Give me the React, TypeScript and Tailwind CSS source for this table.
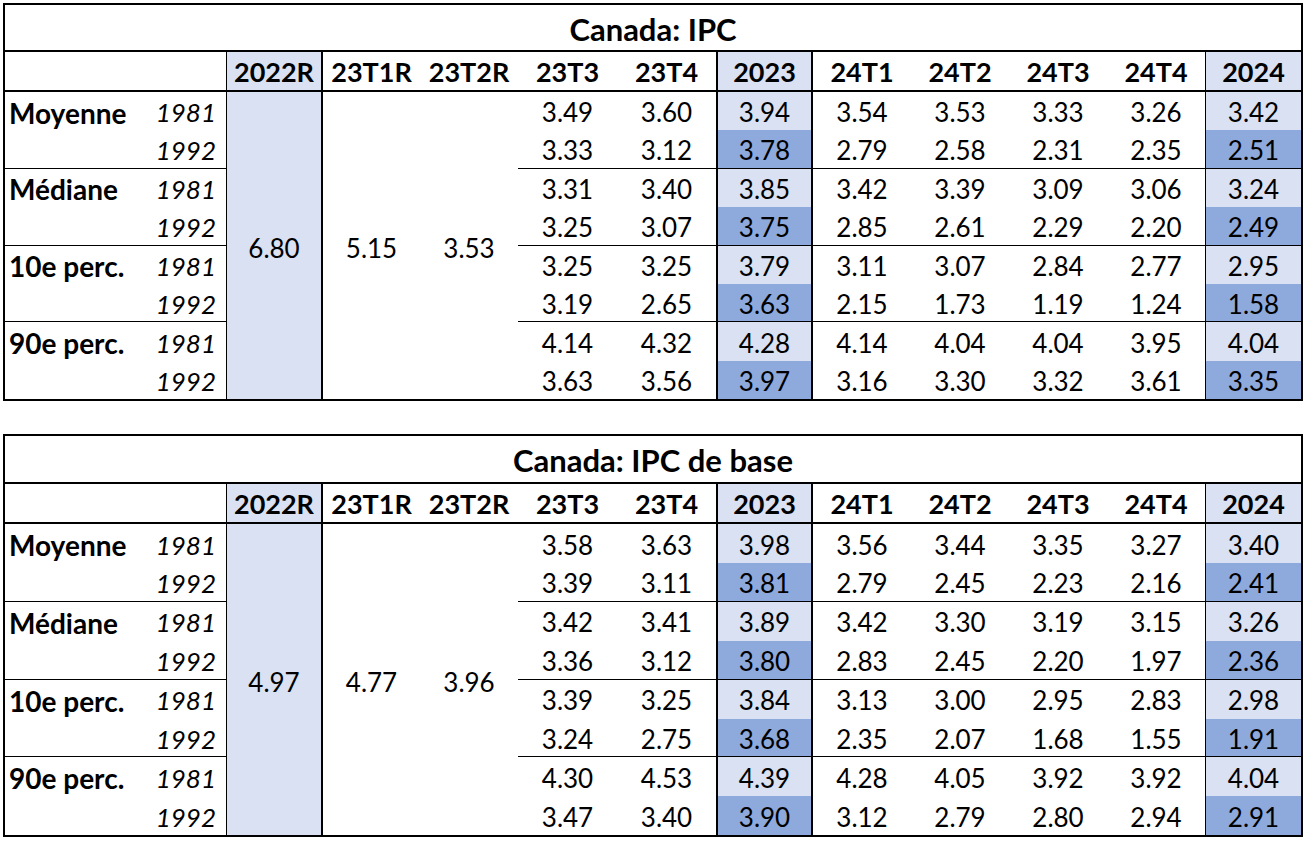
const groups = ["Moyenne", "Médiane", "10e perc.", "90e perc."];
const years = ["1981", "1992"];

const heads = ["2022R", "23T1R", "23T2R", "23T3", "23T4", "2023", "24T1", "24T2", "24T3", "24T4", "2024"];

type TableData = {
  title: string;
  merged: [string, string, string];
  // per row: 23T3, 23T4, 2023, 24T1, 24T2, 24T3, 24T4, 2024
  rows: string[][];
  rowsClass: string;
};

const tables: TableData[] = [
  {
    title: "Canada: IPC",
    merged: ["6.80", "5.15", "3.53"],
    rows: [
      ["3.49", "3.60", "3.94", "3.54", "3.53", "3.33", "3.26", "3.42"],
      ["3.33", "3.12", "3.78", "2.79", "2.58", "2.31", "2.35", "2.51"],
      ["3.31", "3.40", "3.85", "3.42", "3.39", "3.09", "3.06", "3.24"],
      ["3.25", "3.07", "3.75", "2.85", "2.61", "2.29", "2.20", "2.49"],
      ["3.25", "3.25", "3.79", "3.11", "3.07", "2.84", "2.77", "2.95"],
      ["3.19", "2.65", "3.63", "2.15", "1.73", "1.19", "1.24", "1.58"],
      ["4.14", "4.32", "4.28", "4.14", "4.04", "4.04", "3.95", "4.04"],
      ["3.63", "3.56", "3.97", "3.16", "3.30", "3.32", "3.61", "3.35"],
    ],
    rowsClass: "grid-rows-[47px_40px_repeat(8,38.4px)]",
  },
  {
    title: "Canada: IPC de base",
    merged: ["4.97", "4.77", "3.96"],
    rows: [
      ["3.58", "3.63", "3.98", "3.56", "3.44", "3.35", "3.27", "3.40"],
      ["3.39", "3.11", "3.81", "2.79", "2.45", "2.23", "2.16", "2.41"],
      ["3.42", "3.41", "3.89", "3.42", "3.30", "3.19", "3.15", "3.26"],
      ["3.36", "3.12", "3.80", "2.83", "2.45", "2.20", "1.97", "2.36"],
      ["3.39", "3.25", "3.84", "3.13", "3.00", "2.95", "2.83", "2.98"],
      ["3.24", "2.75", "3.68", "2.35", "2.07", "1.68", "1.55", "1.91"],
      ["4.30", "4.53", "4.39", "4.28", "4.05", "3.92", "3.92", "4.04"],
      ["3.47", "3.40", "3.90", "3.12", "2.79", "2.80", "2.94", "2.91"],
    ],
    rowsClass: "grid-rows-[48px_40px_repeat(8,38.9px)]",
  },
];

const font = { fontFamily: "Lato, 'Open Sans', sans-serif" };

function headClass(h: string) {
  if (h === "2022R") return "bg-[#d9e1f2] border-l border-r-2";
  if (h === "2023") return "bg-[#d9e1f2] border-x-2";
  if (h === "2024") return "bg-[#d9e1f2] border-l";
  return "";
}

function DataTable({ t }: { t: TableData }) {
  return (
    <div
      className={`grid w-[1300px] border-2 border-black text-black grid-cols-[145px_76px_97px_97px_98px_99px_99px_97px_98px_98px_98px_98px_96px] ${t.rowsClass}`}
      style={font}
    >
      {/* Title */}
      <div className="col-span-13 flex items-center justify-center border-b-2 border-black pt-[3px] text-[31px] font-bold">
        {t.title}
      </div>

      {/* Header */}
      <div className="col-span-2 border-b-2 border-black" />
      {heads.map((h) => (
        <div
          key={h}
          className={`flex items-center justify-center border-b-2 border-black pt-[3px] text-[27px] font-bold ${headClass(h)}`}
        >
          {h}
        </div>
      ))}

      {/* Body */}
      {t.rows.map((row, i) => {
        const g = Math.floor(i / 2);
        const y = i % 2;
        const sep = y === 1 && g < 3 ? "border-b border-black" : "";
        return [
          <div key={`l${i}`} className={`flex items-center pl-[4px] pt-[3px] text-[28px] font-bold ${sep}`}>
            {y === 0 ? groups[g] : ""}
          </div>,
          <div key={`y${i}`} className={`flex items-center justify-end pr-[10px] pt-[3px] text-[26px] italic ${sep}`}>
            {years[y]}
          </div>,
          ...(i === 0
            ? [
                <div
                  key="m0"
                  className="row-span-8 flex items-center justify-center border-l border-r-2 border-black bg-[#d9e1f2] pt-[5px] text-[26px]"
                >
                  {t.merged[0]}
                </div>,
                <div key="m1" className="row-span-8 flex items-center justify-center pt-[5px] text-[26px]">
                  {t.merged[1]}
                </div>,
                <div key="m2" className="row-span-8 flex items-center justify-center pt-[5px] text-[26px]">
                  {t.merged[2]}
                </div>,
              ]
            : []),
          ...row.map((v, j) => {
            let extra = "";
            if (j === 2) extra = `border-x-2 ${y === 0 ? "bg-[#d9e1f2]" : "bg-[#8ea9db]"}`;
            if (j === 7) extra = `border-l ${y === 0 ? "bg-[#d9e1f2]" : "bg-[#8ea9db]"}`;
            return (
              <div
                key={`c${i}-${j}`}
                className={`flex items-center justify-center border-black pt-[3px] text-[26px] ${sep} ${extra}`}
              >
                {v}
              </div>
            );
          }),
        ];
      })}
    </div>
  );
}

export default function App() {
  return (
    <div className="min-h-screen bg-white pl-[3px] pt-[3px]">
      <DataTable t={tables[0]} />
      <div className="mt-[33px]">
        <DataTable t={tables[1]} />
      </div>
    </div>
  );
}
